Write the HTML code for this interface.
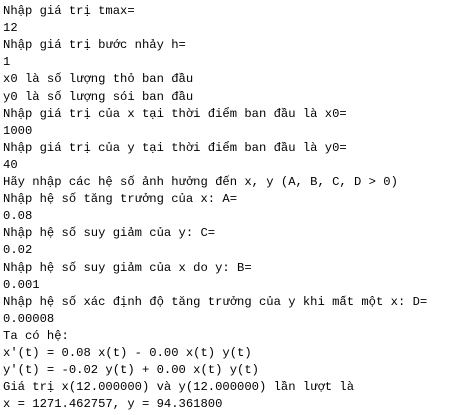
<!DOCTYPE html>
<html><head><meta charset="utf-8"><style>
html,body{margin:0;padding:0;background:#fff;width:453px;height:415px;overflow:hidden;position:relative}
div{position:absolute;left:3px;height:17px;line-height:17px;white-space:pre;font-family:"Liberation Mono",monospace;font-size:12.2px;color:#000}
</style></head><body>
<div style="top:3px">Nhập giá trị tmax=</div>
<div style="top:20.1px">12</div>
<div style="top:37.2px">Nhập giá trị bước nhảy h=</div>
<div style="top:54.3px">1</div>
<div style="top:71.4px">x0 là số lượng thỏ ban đầu</div>
<div style="top:88.5px">y0 là số lượng sói ban đầu</div>
<div style="top:105.6px">Nhập giá trị của x tại thời điểm ban đầu là x0=</div>
<div style="top:122.7px">1000</div>
<div style="top:139.8px">Nhập giá trị của y tại thời điểm ban đầu là y0=</div>
<div style="top:156.9px">40</div>
<div style="top:174px">Hãy nhập các hệ số ảnh hưởng đến x, y (A, B, C, D &gt; 0)</div>
<div style="top:191.1px">Nhập hệ số tăng trưởng của x: A=</div>
<div style="top:208.2px">0.08</div>
<div style="top:225.3px">Nhập hệ số suy giảm của y: C=</div>
<div style="top:242.4px">0.02</div>
<div style="top:259.5px">Nhập hệ số suy giảm của x do y: B=</div>
<div style="top:276.6px">0.001</div>
<div style="top:293.7px">Nhập hệ số xác định độ tăng trưởng của y khi mất một x: D=</div>
<div style="top:310.8px">0.00008</div>
<div style="top:327.9px">Ta có hệ:</div>
<div style="top:345px">x'(t) = 0.08 x(t) - 0.00 x(t) y(t)</div>
<div style="top:362.1px">y'(t) = -0.02 y(t) + 0.00 x(t) y(t)</div>
<div style="top:379.2px">Giá trị x(12.000000) và y(12.000000) lần lượt là</div>
<div style="top:396.3px">x = 1271.462757, y = 94.361800</div>
</body></html>
